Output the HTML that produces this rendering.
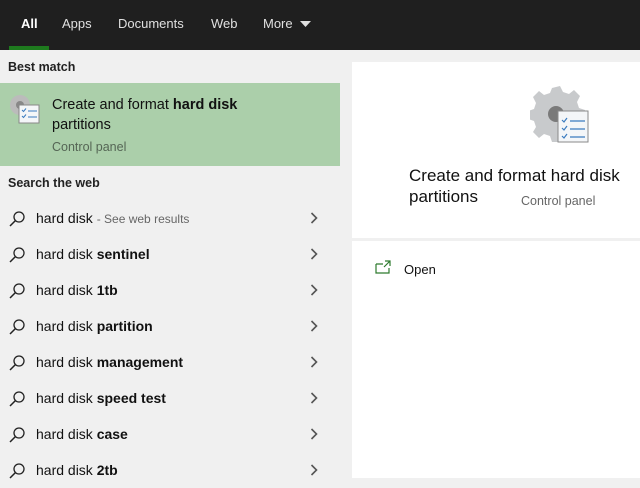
<!DOCTYPE html><html><head><style>
body{margin:0;width:640px;height:478px;overflow:hidden;background:#f0f0f0;font-family:"Liberation Sans",sans-serif;position:relative}
.top{position:absolute;left:0;top:0;width:640px;height:50px;background:#1f1f1f;color:#e0e0e0;font-size:13px}
.top span{position:absolute;top:16px}
.ul{position:absolute;left:9px;top:46px;width:40px;height:4px;background:#1e7a1e}
.left{position:absolute;left:0;top:50px;width:340px;height:428px;background:#f0f0f0}
.hdr{position:absolute;left:8px;font-size:12.5px;color:#222;font-weight:bold}
.best{position:absolute;left:0;top:83px;width:340px;height:83px;background:#abcfaa}
.row{position:absolute;left:0;width:340px;height:36px;font-size:14px;color:#111}
.row .t{position:absolute;left:36px;top:10px}
.row svg.s{position:absolute;left:9px;top:10px}
.row svg.c{position:absolute;left:310px;top:12px}
.right{position:absolute;left:352px;top:62px;width:288px;height:416px;background:#fff}
</style></head><body>
<div class="top"><span style="left:21px;color:#fff;font-weight:bold">All</span><span style="left:62px">Apps</span><span style="left:118px">Documents</span><span style="left:211px">Web</span><span style="left:263px">More</span><svg width="11" height="7" style="position:absolute;left:300px;top:21px"><path d="M0 0h11L5.5 6z" fill="#e0e0e0"/></svg><div class="ul"></div></div>
<div class="left">
<div class="hdr" style="top:10px">Best match</div>
<div class="hdr" style="top:126px">Search the web</div>
</div>
<div class="best">
<svg width="34" height="34" style="position:absolute;left:8px;top:10px" viewBox="0 0 34 34"><circle cx="12" cy="12" r="10" fill="#bbb"/><circle cx="12" cy="12" r="4" fill="#888"/><rect x="11" y="12" width="20" height="18" fill="#f4f6f8" stroke="#888"/><path d="M14 17l1.5 1.5 2.5-3M14 23l1.5 1.5 2.5-3M20 18h9M20 24h9" stroke="#3a7bbf" fill="none"/></svg>
<div style="position:absolute;left:52px;top:12px;font-size:14.5px;color:#111;line-height:20px">Create and format <b>hard disk</b><br>partitions</div>
<div style="position:absolute;left:52px;top:57px;font-size:12.5px;color:#556655">Control panel</div>
</div>
<div class="row" style="top:200px"><svg class="s" width="18" height="18"><circle cx="10" cy="7" r="5" fill="none" stroke="#222" stroke-width="1.3"/><path d="M6.5 10.5L1 16" stroke="#222" stroke-width="1.5"/></svg><span class="t">hard disk <span style="font-size:12px;color:#666">- See web results</span></span><svg class="c" width="8" height="12"><path d="M1.5 1l5 5-5 5" stroke="#555" stroke-width="1.6" fill="none"/></svg></div>
<div class="row" style="top:236px"><svg class="s" width="18" height="18"><circle cx="10" cy="7" r="5" fill="none" stroke="#222" stroke-width="1.3"/><path d="M6.5 10.5L1 16" stroke="#222" stroke-width="1.5"/></svg><span class="t">hard disk <b>sentinel</b></span><svg class="c" width="8" height="12"><path d="M1.5 1l5 5-5 5" stroke="#555" stroke-width="1.6" fill="none"/></svg></div>
<div class="row" style="top:272px"><svg class="s" width="18" height="18"><circle cx="10" cy="7" r="5" fill="none" stroke="#222" stroke-width="1.3"/><path d="M6.5 10.5L1 16" stroke="#222" stroke-width="1.5"/></svg><span class="t">hard disk <b>1tb</b></span><svg class="c" width="8" height="12"><path d="M1.5 1l5 5-5 5" stroke="#555" stroke-width="1.6" fill="none"/></svg></div>
<div class="row" style="top:308px"><svg class="s" width="18" height="18"><circle cx="10" cy="7" r="5" fill="none" stroke="#222" stroke-width="1.3"/><path d="M6.5 10.5L1 16" stroke="#222" stroke-width="1.5"/></svg><span class="t">hard disk <b>partition</b></span><svg class="c" width="8" height="12"><path d="M1.5 1l5 5-5 5" stroke="#555" stroke-width="1.6" fill="none"/></svg></div>
<div class="row" style="top:344px"><svg class="s" width="18" height="18"><circle cx="10" cy="7" r="5" fill="none" stroke="#222" stroke-width="1.3"/><path d="M6.5 10.5L1 16" stroke="#222" stroke-width="1.5"/></svg><span class="t">hard disk <b>management</b></span><svg class="c" width="8" height="12"><path d="M1.5 1l5 5-5 5" stroke="#555" stroke-width="1.6" fill="none"/></svg></div>
<div class="row" style="top:380px"><svg class="s" width="18" height="18"><circle cx="10" cy="7" r="5" fill="none" stroke="#222" stroke-width="1.3"/><path d="M6.5 10.5L1 16" stroke="#222" stroke-width="1.5"/></svg><span class="t">hard disk <b>speed test</b></span><svg class="c" width="8" height="12"><path d="M1.5 1l5 5-5 5" stroke="#555" stroke-width="1.6" fill="none"/></svg></div>
<div class="row" style="top:416px"><svg class="s" width="18" height="18"><circle cx="10" cy="7" r="5" fill="none" stroke="#222" stroke-width="1.3"/><path d="M6.5 10.5L1 16" stroke="#222" stroke-width="1.5"/></svg><span class="t">hard disk <b>case</b></span><svg class="c" width="8" height="12"><path d="M1.5 1l5 5-5 5" stroke="#555" stroke-width="1.6" fill="none"/></svg></div>
<div class="row" style="top:452px"><svg class="s" width="18" height="18"><circle cx="10" cy="7" r="5" fill="none" stroke="#222" stroke-width="1.3"/><path d="M6.5 10.5L1 16" stroke="#222" stroke-width="1.5"/></svg><span class="t">hard disk <b>2tb</b></span><svg class="c" width="8" height="12"><path d="M1.5 1l5 5-5 5" stroke="#555" stroke-width="1.6" fill="none"/></svg></div>
<div class="right">
<svg width="60" height="62" style="position:absolute;left:178px;top:22px" viewBox="0 0 60 62"><path d="M22 4l8-2 3 6 6 2 5-4 6 6-3 6 2 6 6 2v8l-6 2-2 6 3 6-6 6-5-4-6 2-3 6h-8l-2-6-6-2-5 4-6-6 3-5-2-6-6-2v-8l6-2 2-6-3-6 6-6 5 4 6-2z" fill="#c8cacc"/><circle cx="26" cy="30" r="8" fill="#7a7a7a"/><rect x="28" y="27" width="30" height="31" fill="#f4f6f8" stroke="#8a8a8a"/><path d="M32 36l2 2 3-4M32 44l2 2 3-4M32 52l2 2 3-4M40 37h15M40 45h15M40 53h15" stroke="#3a7bbf" stroke-width="1.2" fill="none"/></svg>
<div style="position:absolute;left:57px;top:103px;font-size:17px;color:#111;line-height:21px">Create and format hard disk<br>partitions</div>
<div style="position:absolute;left:169px;top:132px;font-size:12.5px;color:#666">Control panel</div>
<div style="position:absolute;left:0;top:176px;width:288px;height:3px;background:#f0f0f0"></div>
<svg width="16" height="14" style="position:absolute;left:23px;top:198px"><path d="M1 4v9h13V8M1 4h7M10 1h5v5M15 1L9 7" stroke="#2d7a2d" fill="none" stroke-width="1.2"/></svg>
<div style="position:absolute;left:52px;top:200px;font-size:13px;color:#111">Open</div>
</div>
</body></html>
